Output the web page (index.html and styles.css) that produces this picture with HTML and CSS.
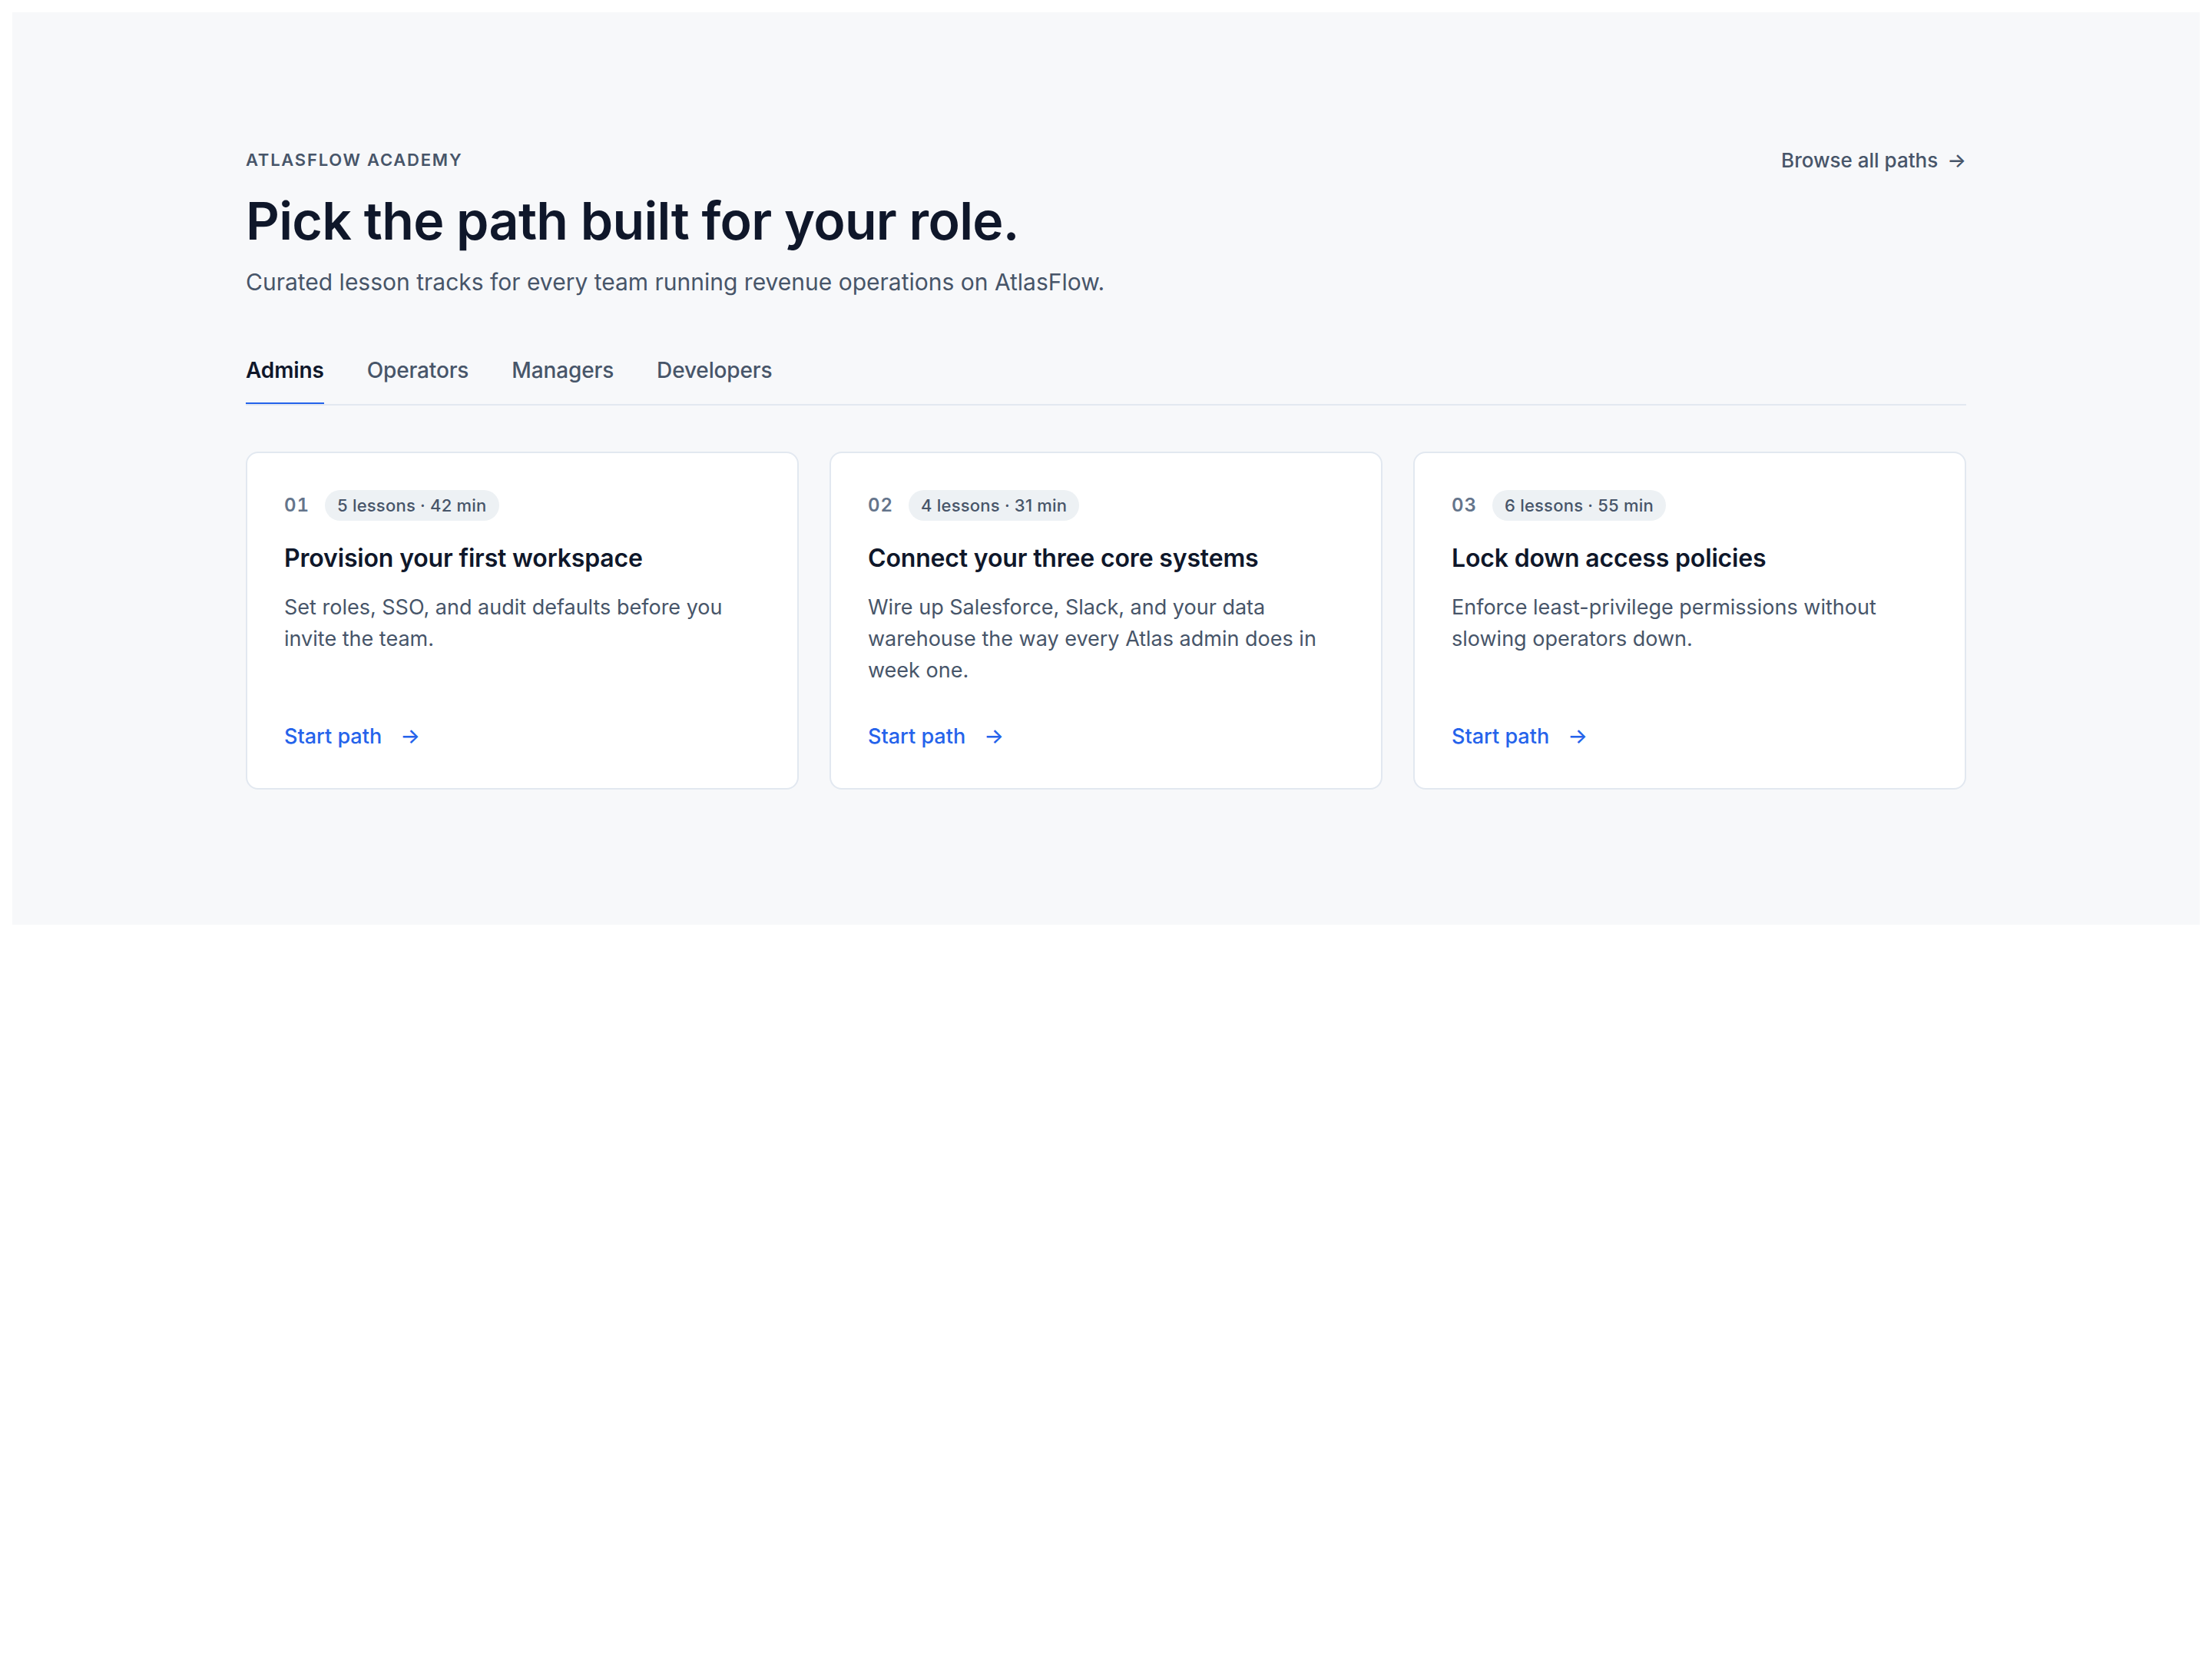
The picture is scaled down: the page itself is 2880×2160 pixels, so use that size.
FILE: index.html
```html
<!DOCTYPE html>
<html lang="en">
<head>
<meta charset="utf-8">
<meta name="viewport" content="width=device-width, initial-scale=1">
<title>AtlasFlow Academy</title>
<link rel="stylesheet" href="styles.css">
</head>
<body>
<section class="academy">
  <div class="container">
    <header class="header">
      <div class="intro">
        <p class="eyebrow">AtlasFlow Academy</p>
        <h1 class="title">Pick the path built for your role.</h1>
        <p class="subtitle">Curated lesson tracks for every team running revenue operations on AtlasFlow.</p>
      </div>
      <a class="browse" href="#paths">Browse all paths <span class="arrow" aria-hidden="true">→</span></a>
    </header>
    <div class="tabs" role="tablist" aria-label="Role">
      <button class="tab tab-active" type="button" role="tab" aria-selected="true">Admins</button>
      <button class="tab" type="button" role="tab" aria-selected="false">Operators</button>
      <button class="tab" type="button" role="tab" aria-selected="false">Managers</button>
      <button class="tab" type="button" role="tab" aria-selected="false">Developers</button>
    </div>
    <div class="cards" id="paths">
      <article class="card">
        <div class="meta"><span class="number">01</span><span class="pill">5 lessons · 42 min</span></div>
        <h2 class="card-title">Provision your first workspace</h2>
        <p class="card-text">Set roles, SSO, and audit defaults before you invite the team.</p>
        <a class="start" href="#provision">Start path <span class="arrow" aria-hidden="true">→</span></a>
      </article>
      <article class="card">
        <div class="meta"><span class="number">02</span><span class="pill">4 lessons · 31 min</span></div>
        <h2 class="card-title">Connect your three core systems</h2>
        <p class="card-text">Wire up Salesforce, Slack, and your data warehouse the way every Atlas admin does in week one.</p>
        <a class="start" href="#connect">Start path <span class="arrow" aria-hidden="true">→</span></a>
      </article>
      <article class="card">
        <div class="meta"><span class="number">03</span><span class="pill">6 lessons · 55 min</span></div>
        <h2 class="card-title">Lock down access policies</h2>
        <p class="card-text">Enforce least-privilege permissions without slowing operators down.</p>
        <a class="start" href="#policies">Start path <span class="arrow" aria-hidden="true">→</span></a>
      </article>
    </div>
  </div>
</section>
</body>
</html>
```
FILE: styles.css
```css
* {
  box-sizing: border-box;
}

body {
  margin: 16px;
  background: #ffffff;
  color: #0f172a;
  font-family: Inter, "Liberation Sans", sans-serif;
}

h1,
h2,
p {
  margin: 0;
}

a {
  text-decoration: none;
}

.academy {
  padding: 176px 48px;
  background: #f7f8fa;
}

.container {
  max-width: 2240px;
  margin: 0 auto;
}

.header {
  display: flex;
  justify-content: space-between;
  align-items: flex-start;
  gap: 48px;
}

.intro {
  display: flex;
  flex-direction: column;
}

.eyebrow {
  color: #475569;
  font-size: 22px;
  font-weight: 600;
  line-height: 32px;
  letter-spacing: 0.08em;
  text-transform: uppercase;
}

.title {
  margin-top: 24px;
  font-size: 68px;
  font-weight: 600;
  line-height: 78px;
  letter-spacing: -0.01em;
}

.subtitle {
  margin-top: 18px;
  color: #475569;
  font-size: 30px;
  line-height: 46px;
}

.browse {
  display: flex;
  align-items: center;
  gap: 12px;
  color: #475569;
  font-size: 26px;
  font-weight: 500;
  line-height: 34px;
}

.tabs {
  display: flex;
  gap: 56px;
  margin-top: 58px;
  border-bottom: 2px solid #e2e8f0;
}

.tab {
  padding: 16px 0 24px;
  border: 0;
  border-bottom: 2px solid transparent;
  background: none;
  color: #475569;
  font-family: inherit;
  font-size: 28px;
  font-weight: 500;
  line-height: 36px;
  letter-spacing: -0.005em;
  cursor: pointer;
}

.tab-active {
  border-bottom-color: #2563eb;
  color: #0f172a;
  font-weight: 600;
}

.cards {
  display: grid;
  grid-template-columns: repeat(3, 1fr);
  gap: 40px;
  margin-top: 60px;
}

.card {
  display: flex;
  flex-direction: column;
  align-items: flex-start;
  padding: 48px;
  border: 2px solid #e2e8f0;
  border-radius: 16px;
  background: #ffffff;
}

.meta {
  display: flex;
  align-items: center;
  gap: 20px;
}

.number {
  color: #64748b;
  font-size: 24px;
  font-weight: 600;
  font-variant-numeric: tabular-nums;
  line-height: 40px;
  letter-spacing: 0.04em;
}

.pill {
  padding: 0 16px;
  border-radius: 20px;
  background: #edf1f4;
  color: #475569;
  font-size: 22px;
  font-weight: 500;
  line-height: 40px;
  letter-spacing: 0.01em;
}

.card-title {
  margin-top: 28px;
  font-size: 32px;
  font-weight: 600;
  line-height: 42px;
  letter-spacing: -0.005em;
}

.card-text {
  margin-top: 22px;
  color: #475569;
  font-size: 27px;
  line-height: 41px;
}

.start {
  display: flex;
  align-items: center;
  gap: 24px;
  margin-top: auto;
  padding-top: 47px;
  color: #2563eb;
  font-size: 27px;
  font-weight: 500;
  line-height: 38px;
}
```
